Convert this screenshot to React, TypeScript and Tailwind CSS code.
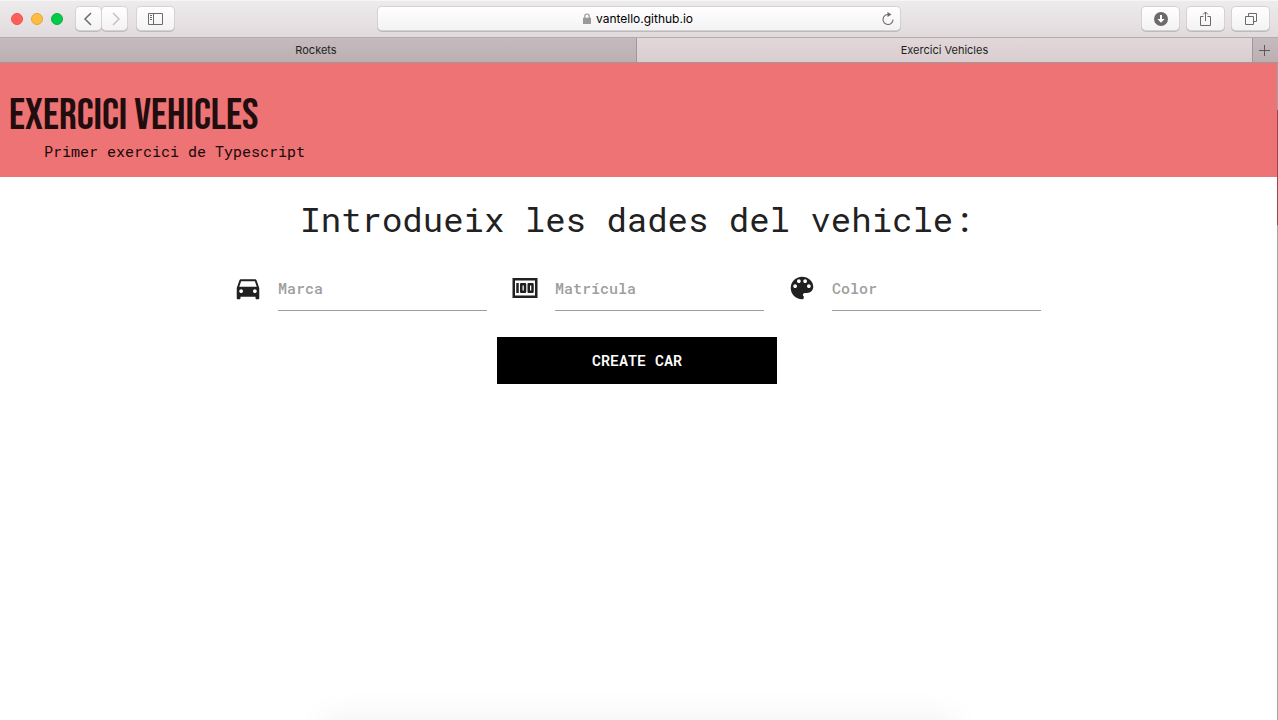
import React from "react";

const TOOL =
  "flex h-[23px] items-center justify-center rounded bg-linear-to-b from-white to-[#f4f3f3] shadow-[0_0_0_1px_#d6d1d3,0_1px_0_1px_#bfb9bb] text-[#6d6a6b]";

function Field({ id, label, d }: { id: string; label: string; d: string }) {
  return (
    <div className="flex h-[42px] items-start">
      <label htmlFor={id} className="mt-1 shrink-0">
        <svg viewBox="0 0 24 24" className="size-[30px] fill-[#212121]" role="img" aria-label={label}>
          <path d={d} />
        </svg>
      </label>
      <input
        id={id}
        placeholder={label}
        className="ml-[15px] h-[42px] min-w-0 flex-1 border-b border-[#9e9e9e] bg-transparent pb-1 text-[15px] font-medium text-[#212121] outline-none placeholder:text-[#9e9e9e]"
      />
    </div>
  );
}

const CAR =
  "M18.92 6.01C18.72 5.42 18.16 5 17.5 5h-11c-.66 0-1.21.42-1.42 1.01L3 12v8c0 .55.45 1 1 1h1c.55 0 1-.45 1-1v-1h12v1c0 .55.45 1 1 1h1c.55 0 1-.45 1-1v-8l-2.08-5.99zM6.5 16c-.83 0-1.5-.67-1.5-1.5S5.67 13 6.5 13s1.5.67 1.5 1.5S7.33 16 6.5 16zm11 0c-.83 0-1.5-.67-1.5-1.5s.67-1.5 1.5-1.5 1.5.67 1.5 1.5-.67 1.5-1.5 1.5zM5 11l1.5-4.5h11L19 11H5z";
const MONEY =
  "M15 16h3c.55 0 1-.45 1-1V9c0-.55-.45-1-1-1h-3c-.55 0-1 .45-1 1v6c0 .55.45 1 1 1zm1-6h1v4h-1v-4zM9 16h3c.55 0 1-.45 1-1V9c0-.55-.45-1-1-1H9c-.55 0-1 .45-1 1v6c0 .55.45 1 1 1zm1-6h1v4h-1v-4zM5 8h2v8H5zM2 4v16h20V4H2zm2 14V6h16v12H4z";
const PALETTE =
  "M12 3c-4.97 0-9 4.03-9 9s4.03 9 9 9c.83 0 1.5-.67 1.5-1.5 0-.39-.15-.74-.39-1.01-.23-.26-.38-.61-.38-.99 0-.83.67-1.5 1.5-1.5H16c2.76 0 5-2.24 5-5 0-4.42-4.03-8-9-8zm-5.5 9c-.83 0-1.5-.67-1.5-1.5S5.67 9 6.5 9 8 9.67 8 10.5 7.33 12 6.5 12zm3-4C8.67 8 8 7.33 8 6.5S8.67 5 9.5 5s1.5.67 1.5 1.5S10.33 8 9.5 8zm5 0c-.83 0-1.5-.67-1.5-1.5S13.67 5 14.5 5s1.5.67 1.5 1.5S15.33 8 14.5 8zm3 4c-.83 0-1.5-.67-1.5-1.5S16.67 9 17.5 9s1.5.67 1.5 1.5-.67 1.5-1.5 1.5z";

function Toolbar() {
  return (
    <div className="grid h-[37px] grid-cols-[1fr_minmax(0,522px)_1fr] items-center bg-linear-to-b from-[#eeecee] to-[#e1dadc] pr-[9px] pl-2 shadow-[inset_0_1px_0_#f7f6f7]">
      <div className="flex items-center pl-[3px]">
        <div className="flex gap-2">
          <button aria-label="Close" className="size-3 rounded-full border border-[#e9534e] bg-[#ff5f58]" />
          <button aria-label="Minimize" className="size-3 rounded-full border border-[#e5a43a] bg-[#ffbd40]" />
          <button aria-label="Zoom" className="size-3 rounded-full border border-[#06b23d] bg-[#02cb47]" />
        </div>
        <div className="ml-[13px] flex gap-px">
          <button aria-label="Back" className={`${TOOL} w-[25px]`}>
            <svg viewBox="0 0 12 14" className="h-3.5 w-3 fill-none stroke-current stroke-[1.5]"><path d="M8 1 2 7l6 6" /></svg>
          </button>
          <button aria-label="Forward" className={`${TOOL} w-[25px]`}>
            <svg viewBox="0 0 12 14" className="h-3.5 w-3 fill-none stroke-[#c5c3c4] stroke-[1.5]"><path d="m4 1 6 6-6 6" /></svg>
          </button>
        </div>
        <button aria-label="Show sidebar" className={`${TOOL} ml-2.5 w-[37px]`}>
          <svg viewBox="0 0 15 12" className="h-3 w-[15px] fill-none stroke-current"><path d="M.5.5h14v11H.5zM5.5.5v11M2 2.5h2M2 4.5h2M2 6.5h2" /></svg>
        </button>
      </div>
      <div className={`${TOOL} px-1.5`}>
        <div className="flex flex-1 items-center justify-center gap-[5px] pl-[11px]">
          <svg viewBox="0 0 8 11" className="h-[11px] w-2" aria-hidden="true">
            <path d="M1.8 5V3.2a2.2 2.2 0 0 1 4.4 0V5" fill="none" stroke="#999" strokeWidth="1.2" />
            <path d="M0 4.7h8V11H0z" fill="#999" />
          </svg>
          <span className="pt-px font-['Inter','Liberation_Sans',sans-serif] text-xs text-black">vantello.github.io</span>
        </div>
        <button aria-label="Reload">
          <svg viewBox="0 0 12 14" className="h-3.5 w-3">
            <path d="M6.5 2.5A5 5 0 1 0 11 7.5" fill="none" stroke="currentColor" strokeWidth="1.1" />
            <path d="m5.5 0 4 2.6-4 2.4z" fill="currentColor" />
          </svg>
        </button>
      </div>
      <div className="flex justify-end gap-2">
        <button aria-label="Downloads" className={`${TOOL} w-[37px]`}>
          <svg viewBox="0 0 14 14" className="size-3.5"><circle cx="7" cy="7" r="7" fill="currentColor" /><path d="M6 3h2v4h2.6L7 10.8 3.4 7H6z" fill="#fff" /></svg>
        </button>
        <button aria-label="Share" className={`${TOOL} w-[37px]`}>
          <svg viewBox="0 0 11 16" className="h-4 w-[11px] fill-none stroke-current"><path d="M3.5 5.5h-3v9h10v-9h-3M5.5 10V1M3 3.5 5.5 1 8 3.5" /></svg>
        </button>
        <button aria-label="Show all tabs" className={`${TOOL} w-[37px]`}>
          <svg viewBox="0 0 12 12" className="size-3 fill-none stroke-current"><path d="M.5 3.5h8v8h-8zM3.5 3.5v-3h8v8h-3" /></svg>
        </button>
      </div>
    </div>
  );
}

export default function App() {
  return (
    <div className="relative flex min-h-screen flex-col overflow-hidden bg-white font-['Roboto_Mono','DejaVu_Sans_Mono',monospace] text-[#212121]">
      <Toolbar />
      <div className="flex h-[26px] border-y border-t-[#b5abae] border-b-[#a0989a] bg-linear-to-b from-[#c5babd] to-[#bbafb2] pr-0.5 font-['Inter','Liberation_Sans',sans-serif] text-[11px] text-[#231f20]">
        <div className="flex flex-[636]">
          <button className="flex-1 pr-1">Rockets</button>
        </div>
        <div className="flex flex-[640]">
          <button className="flex-1 border-x border-[#a0979a] bg-linear-to-b from-[#e1d8da] to-[#d9cdd0]">Exercici Vehicles</button>
          <button aria-label="New tab" className="flex w-[23px] items-center justify-center">
            <svg viewBox="0 0 11 11" className="size-[11px] stroke-[#5f585a]"><path d="M5.5 0v11M0 5.5h11" /></svg>
          </button>
        </div>
      </div>
      <header className="h-[114px] bg-[#ee7374] px-[9px] pt-[30px]">
        <h1 className="font-['Bebas_Neue','Roboto_Condensed','Liberation_Sans_Narrow',sans-serif] text-[44px] leading-[46px] font-normal whitespace-nowrap text-[#210d0e]">EXERCICI VEHICLES</h1>
        <p className="pl-[35px] text-[15px] leading-6 text-[#180809]">Primer exercici de Typescript</p>
      </header>
      <main className="pr-7 pl-6">
        <h2 className="pt-[19px] text-center text-[34px] leading-[46px]">Introdueix les dades del vehicle:</h2>
        <form className="mx-auto mt-[27px] max-w-[808px]" onSubmit={(e) => e.preventDefault()}>
          <div className="grid grid-cols-3 gap-[23px]">
            <Field id="brand" label="Marca" d={CAR} />
            <Field id="plate" label="Matrícula" d={MONEY} />
            <Field id="color" label="Color" d={PALETTE} />
          </div>
          <button type="submit" className="mx-auto mt-[26px] block h-[47px] w-[280px] bg-black text-[15px] font-semibold text-white">CREATE CAR</button>
        </form>
      </main>
      <div className="absolute top-[63px] right-0 bottom-0 w-px bg-[#a3a3a3]">
        <div className="mt-[47px] h-[115px] bg-[#9c4546]" />
      </div>
      <div className="absolute inset-x-[324px] -bottom-5 h-5 shadow-[0_0_32px_0_#00000014]" />
    </div>
  );
}
